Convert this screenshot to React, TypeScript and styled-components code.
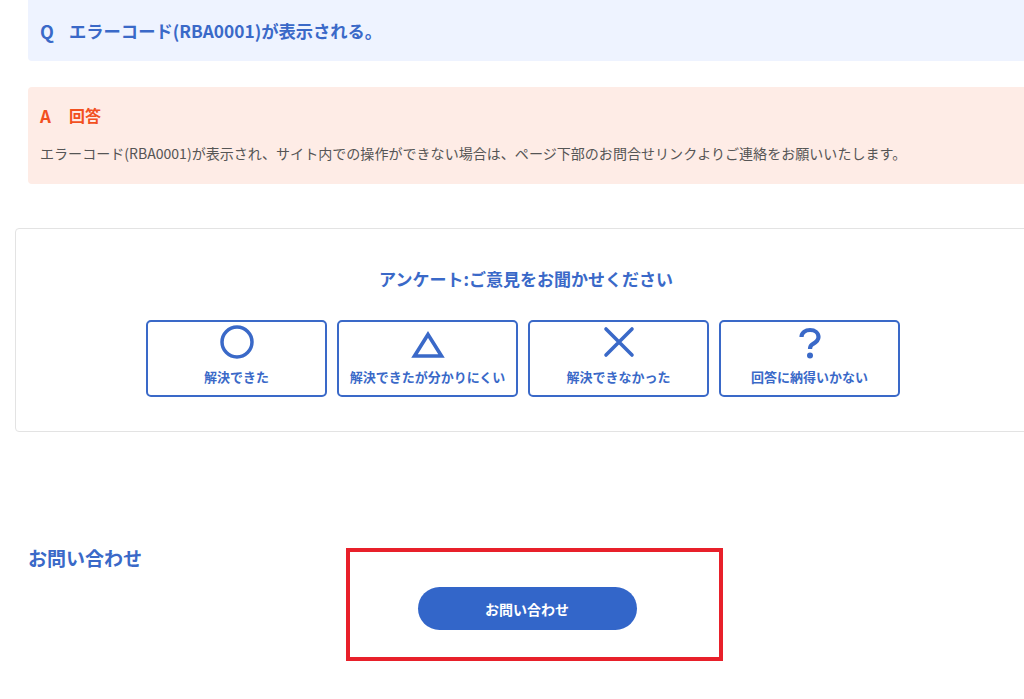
import styled, { createGlobalStyle } from "styled-components";

const GlobalStyle = createGlobalStyle`
    html, body {
        margin: 0;
        padding: 0;
        background: #ffffff;
        overflow-x: hidden;
    }
    body {
        font-family: "Noto Sans CJK JP", "Noto Sans", sans-serif;
        color: #555555;
    }
`;

const Page = styled.div`
    width: 1060px;
    padding-bottom: 40px;
`;

const QuestionBox = styled.div`
    display: flex;
    align-items: center;
    margin: -4px 0 0 28px;
    height: 65px;
    padding: 4px 0 0 12px;
    box-sizing: border-box;
    background: #eef3ff;
    border-radius: 4px;
`;

const Mark = styled.span<{ $color: string }>`
    width: 29px;
    flex-shrink: 0;
    font-weight: 700;
    font-size: ${p => (p.$color === "q" ? "18px" : "17px")};
    color: ${p => (p.$color === "q" ? "#3a69c8" : "#f2501f")};
`;

const QuestionText = styled.h2`
    margin: 0;
    font-size: 17.3px;
    font-weight: 700;
    color: #3a69c8;
    line-height: 24px;
`;

const AnswerBox = styled.div`
    margin: 26px 0 0 28px;
    padding: 16px 0 19px 12px;
    background: #feece6;
    border-radius: 4px;
`;

const AnswerHead = styled.div`
    display: flex;
    align-items: center;
    height: 24px;
`;

const AnswerTitle = styled.h3`
    margin: 0;
    font-size: 16px;
    font-weight: 700;
    color: #f2501f;
`;

const AnswerBody = styled.p`
    margin: 14px 0 0;
    font-size: 14.05px;
    line-height: 24px;
    color: #555555;
`;

const SurveyCard = styled.section`
    margin: 44px 0 0 15px;
    width: 1020px;
    padding: 38px 0 34px;
    border: 1px solid #e3e3e3;
    border-radius: 4px;
    display: flex;
    flex-direction: column;
    align-items: center;
`;

const SurveyTitle = styled.h3`
    margin: 0;
    font-size: 17px;
    line-height: 24px;
    font-weight: 700;
    color: #3a69c8;
`;

const ChoiceRow = styled.div`
    display: grid;
    grid-template-columns: repeat(4, 181px);
    gap: 10px;
    margin: 29px 6px 0 0;
`;

const Choice = styled.button`
    display: flex;
    flex-direction: column;
    align-items: center;
    height: 77px;
    padding: 3px 0 9px;
    box-sizing: border-box;
    background: #ffffff;
    border: 2px solid #3a69c8;
    border-radius: 5px;
    cursor: pointer;
    font-family: inherit;
`;

const ChoiceIcon = styled.svg`
    width: 34px;
    height: 34px;
    stroke: #3a69c8;
    fill: none;
`;

const ChoiceLabel = styled.span`
    margin-top: 9px;
    font-size: 13px;
    line-height: 18px;
    font-weight: 700;
    color: #3a69c8;
`;

const ContactSection = styled.section`
    margin-top: 112px;
`;

const ContactHeading = styled.h2`
    margin: 0 0 0 28px;
    font-size: 19px;
    line-height: 27px;
    font-weight: 700;
    color: #3a69c8;
`;

const ContactRow = styled.div`
    display: flex;
    justify-content: center;
    width: 1020px;
    margin: 16px 0 0 17px;
`;

const ButtonWrap = styled.div`
    position: relative;
`;

const Highlight = styled.div`
    position: absolute;
    left: -72px;
    top: -39px;
    right: -86px;
    bottom: -31px;
    border: 4px solid #e8202a;
    pointer-events: none;
`;

const ContactButton = styled.button`
    display: block;
    width: 219px;
    height: 43px;
    border: none;
    border-radius: 22px;
    background: #3366c9;
    color: #ffffff;
    font-family: inherit;
    font-size: 14px;
    font-weight: 700;
    cursor: pointer;
`;

const choices = [
    { key: "ok", label: "解決できた" },
    { key: "hard", label: "解決できたが分かりにくい" },
    { key: "ng", label: "解決できなかった" },
    { key: "q", label: "回答に納得いかない" },
];

function Icon({ kind }: { kind: string }) {
    return (
        <ChoiceIcon viewBox="0 0 34 34">
            {kind === "ok" && <circle cx="17" cy="17" r="15" strokeWidth="3.5" />}
            {kind === "hard" && (
                <path d="M17 9.5 L30.5 31 L3.5 31 Z" strokeWidth="3.6" strokeLinejoin="miter" />
            )}
            {kind === "ng" && (
                <path d="M4 4 L30 30 M30 4 L4 30" strokeWidth="3.6" strokeLinecap="round" />
            )}
            {kind === "q" && (
                <>
                    <path
                        d="M8.5 12 C8.5 7.5 12.5 5 17 5 C22 5 25.5 8 25.5 12 C25.5 16 22.5 17.5 19.8 19 C17.8 20.2 17 21.5 17 24"
                        strokeWidth="4.2"
                        strokeLinecap="butt"
                    />
                    <circle cx="17" cy="30.5" r="3" fill="#3a69c8" stroke="none" />
                </>
            )}
        </ChoiceIcon>
    );
}

function App() {
    return (
        <Page>
            <GlobalStyle />
            <QuestionBox>
                <Mark $color="q">Q</Mark>
                <QuestionText>エラーコード(RBA0001)が表示される。</QuestionText>
            </QuestionBox>

            <AnswerBox>
                <AnswerHead>
                    <Mark $color="a">A</Mark>
                    <AnswerTitle>回答</AnswerTitle>
                </AnswerHead>
                <AnswerBody>
                    エラーコード(RBA0001)が表示され、サイト内での操作ができない場合は、ページ下部のお問合せリンクよりご連絡をお願いいたします。
                </AnswerBody>
            </AnswerBox>

            <SurveyCard>
                <SurveyTitle>アンケート:ご意見をお聞かせください</SurveyTitle>
                <ChoiceRow>
                    {choices.map(c => (
                        <Choice key={c.key}>
                            <Icon kind={c.key} />
                            <ChoiceLabel>{c.label}</ChoiceLabel>
                        </Choice>
                    ))}
                </ChoiceRow>
            </SurveyCard>

            <ContactSection>
                <ContactHeading>お問い合わせ</ContactHeading>
                <ContactRow>
                    <ButtonWrap>
                        <ContactButton>お問い合わせ</ContactButton>
                        <Highlight />
                    </ButtonWrap>
                </ContactRow>
            </ContactSection>
        </Page>
    );
}

export default App;
